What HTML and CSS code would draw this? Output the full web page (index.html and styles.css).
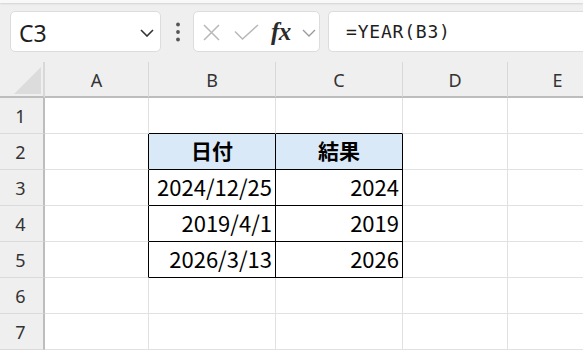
FILE: index.html
```html
<!DOCTYPE html>
<html lang="ja">
<head>
    <meta charset="UTF-8">
    <meta name="viewport" content="width=device-width, initial-scale=1.0">
    <title>YEAR関数</title>
    <link rel="stylesheet" href="styles.css">
</head>
<body>
    <div class="topband"></div>
    <div class="toolbar">
        <div class="namebox">
            <span class="name">C3</span>
            <svg class="chev" width="14" height="8" viewBox="0 0 14 8"><path d="M1 1 L7 7 L13 1" fill="none" stroke="#333" stroke-width="1.6"/></svg>
        </div>
        <div class="dots">
            <svg width="6" height="20" viewBox="0 0 6 20"><circle cx="3" cy="2.5" r="1.9" fill="#555"/><circle cx="3" cy="10" r="1.9" fill="#555"/><circle cx="3" cy="17.5" r="1.9" fill="#555"/></svg>
        </div>
        <div class="fxbox">
            <svg class="ic-x" width="17" height="17" viewBox="0 0 17 17"><path d="M1 1 L16 16 M16 1 L1 16" stroke="#b8b8b8" stroke-width="1.5" fill="none"/></svg>
            <svg class="ic-ok" width="25" height="16" viewBox="0 0 25 16"><path d="M1 7.5 L8.5 15 L24 1" stroke="#b8b8b8" stroke-width="1.5" fill="none"/></svg>
            <span class="fx">fx</span>
            <svg class="ic-dd" width="14" height="8" viewBox="0 0 14 8"><path d="M1 1 L7 7 L13 1" fill="none" stroke="#9a9a9a" stroke-width="1.3"/></svg>
        </div>
        <div class="formula">=YEAR(B3)</div>
    </div>

    <div class="sheet">
        <!-- 列見出し -->
        <div class="corner"><div class="tri"></div></div>
        <div class="colhead">A</div>
        <div class="colhead">B</div>
        <div class="colhead">C</div>
        <div class="colhead">D</div>
        <div class="colhead last">E</div>

        <div class="rowhead">1</div>
        <div class="cell"></div>
        <div class="cell edge-b"></div>
        <div class="cell edge-b"></div>
        <div class="cell"></div>
        <div class="cell last"></div>

        <div class="rowhead">2</div>
        <div class="cell edge-r"></div>
        <div class="cell tb th">日付</div>
        <div class="cell tb th">結果</div>
        <div class="cell"></div>
        <div class="cell last"></div>

        <div class="rowhead">3</div>
        <div class="cell edge-r"></div>
        <div class="cell tb">2024/12/25</div>
        <div class="cell tb">2024</div>
        <div class="cell"></div>
        <div class="cell last"></div>

        <div class="rowhead">4</div>
        <div class="cell edge-r"></div>
        <div class="cell tb">2019/4/1</div>
        <div class="cell tb">2019</div>
        <div class="cell"></div>
        <div class="cell last"></div>

        <div class="rowhead">5</div>
        <div class="cell edge-r"></div>
        <div class="cell tb">2026/3/13</div>
        <div class="cell tb">2026</div>
        <div class="cell"></div>
        <div class="cell last"></div>

        <div class="rowhead">6</div>
        <div class="cell"></div>
        <div class="cell"></div>
        <div class="cell"></div>
        <div class="cell"></div>
        <div class="cell last"></div>

        <div class="rowhead">7</div>
        <div class="cell"></div>
        <div class="cell"></div>
        <div class="cell"></div>
        <div class="cell"></div>
        <div class="cell last"></div>
    </div>
</body>
</html>
```

FILE: styles.css
```css
html, body {
    margin: 0;
    padding: 0;
    width: 583px;
    height: 350px;
    overflow: hidden;
    background-color: #efefef;
    font-family: "Noto Sans", "Noto Sans CJK JP", sans-serif;
    color: #222;
}
* {
    box-sizing: border-box;
}

/* 上端の帯 */
.topband {
    height: 3px;
    background-color: #f8f8f8;
    box-shadow: 0 1px 2px rgba(0, 0, 0, 0.12);
}

/* 数式バー */
.toolbar {
    display: flex;
    align-items: center;
    height: 59px;
    padding: 8px 0 10px 10px;
}
.namebox {
    display: flex;
    align-items: center;
    justify-content: space-between;
    width: 151px;
    height: 41px;
    padding: 0 6px 0 8px;
    background-color: #fff;
    border: 1px solid #dcdcdc;
    border-radius: 5px;
}
.name {
    font-size: 23px;
    line-height: 1;
    color: #1e1e1e;
    margin-top: 4px;
}
.chev {
    margin-top: 2px;
}
.dots {
    width: 32px;
    display: flex;
    justify-content: center;
    padding-left: 1px;
}
.dots svg {
    display: block;
}
.fxbox {
    display: flex;
    align-items: center;
    width: 127px;
    height: 41px;
    padding-left: 9px;
    background-color: #fff;
    border: 1px solid #dcdcdc;
    border-radius: 5px;
}
.ic-x {
    margin-top: 1px;
}
.ic-ok {
    margin-left: 14px;
}
.fx {
    margin-left: 12px;
    width: 23px;
    font-family: "Liberation Serif", serif;
    font-style: italic;
    font-weight: bold;
    font-size: 25px;
    line-height: 1;
    color: #2a2a2a;
    letter-spacing: -0.5px;
}
.ic-dd {
    margin-left: 8px;
    margin-top: 2px;
}
.formula {
    flex: 1;
    height: 41px;
    margin-left: 8px;
    padding-left: 17px;
    display: flex;
    align-items: center;
    background-color: #fff;
    border: 1px solid #dcdcdc;
    border-right: none;
    border-radius: 5px 0 0 5px;
    font-family: "DejaVu Sans Mono", monospace;
    font-size: 18px;
    letter-spacing: 0.8px;
    color: #1e1e1e;
}

/* シート */
.sheet {
    display: grid;
    grid-template-columns: 45px 104px 127px 127px 105px 1fr;
    grid-auto-rows: 36px;
}
.corner {
    display: flex;
    justify-content: flex-end;
    align-items: flex-end;
    padding: 0 2px 2px 0;
    border-right: 2px solid #d8d8d8;
    border-bottom: 2px solid #bdbdbd;
}
.tri {
    width: 27px;
    height: 27px;
    background-color: #dcdcdc;
    clip-path: polygon(100% 0, 100% 100%, 0 100%);
}
.colhead {
    display: flex;
    align-items: center;
    justify-content: center;
    border-right: 1px solid #d8d8d8;
    border-bottom: 2px solid #bdbdbd;
    font-size: 18px;
    color: #333;
    padding-top: 2px;
}
.colhead.last {
    padding-left: 24px;
}
.rowhead {
    display: flex;
    align-items: center;
    justify-content: center;
    border-right: 2px solid #bdbdbd;
    border-bottom: 1px solid #dadada;
    font-size: 18px;
    color: #333;
    padding-right: 2px;
}
.cell {
    display: flex;
    align-items: center;
    justify-content: flex-end;
    padding-right: 3px;
    padding-bottom: 3px;
    background-color: #fff;
    border-right: 1px solid #e1e1e1;
    border-bottom: 1px solid #e1e1e1;
    font-family: "Noto Sans CJK JP", sans-serif;
    font-size: 22px;
    color: #000;
    white-space: nowrap;
}
.last {
    border-right: none;
}
/* 表の罫線 */
.tb {
    border-right-color: #000;
    border-bottom-color: #000;
}
.edge-r {
    border-right-color: #000;
}
.edge-b {
    border-bottom-color: #000;
}
.th {
    justify-content: center;
    padding-right: 0;
    background-color: #dae9f8;
    font-size: 21px;
    font-weight: bold;
}
```
